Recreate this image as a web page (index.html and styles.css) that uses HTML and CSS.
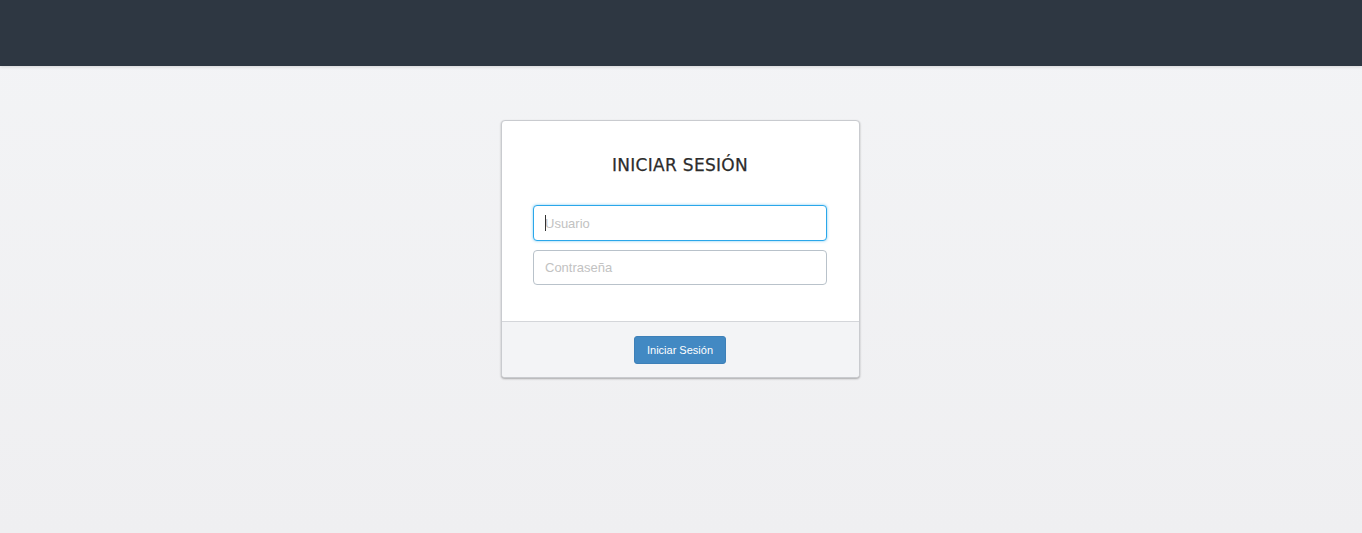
FILE: index.html
```html
<!DOCTYPE html>
<html lang="es">
<head>
<meta charset="utf-8">
<title>Iniciar Sesión</title>
<link rel="stylesheet" href="styles.css">
</head>
<body>
<header class="topbar"></header>
<main class="page">
  <form class="login-card">
    <div class="login-body">
      <h1 class="login-title">INICIAR SESIÓN</h1>
      <div class="field field-focused">
        <input class="input input-focused" type="text" placeholder="Usuario">
        <span class="caret"></span>
      </div>
      <div class="field">
        <input class="input" type="password" placeholder="Contraseña">
      </div>
    </div>
    <div class="login-footer">
      <button class="btn-primary" type="button">Iniciar Sesión</button>
    </div>
  </form>
</main>
</body>
</html>
```
FILE: styles.css
```css
* { box-sizing: border-box; }
html, body { margin: 0; height: 100%; }
body {
  background: linear-gradient(#f3f4f6, #efeff1);
  font-family: "Liberation Sans", Arial, sans-serif;
  color: #333;
}
.topbar {
  height: 66px;
  background: #2e3742;
  box-shadow: 0 1px 3px rgba(0,0,0,0.12);
}
.page {
  display: flex;
  justify-content: center;
  padding-top: 54px;
  padding-right: 1px;
}
.login-card {
  width: 359px;
  background: #fff;
  border: 1px solid #c9cbcf;
  border-radius: 4px;
  box-shadow: 0 1px 2px rgba(0,0,0,0.3);
  overflow: hidden;
}
.login-body {
  padding: 33px 32px 36px 31px;
  display: flex;
  flex-direction: column;
  gap: 9px;
}
.login-title {
  margin: 0 0 21px;
  padding-top: 1px;
  font-family: "DejaVu Sans", Verdana, sans-serif;
  font-size: 17px;
  line-height: 20px;
  font-weight: normal;
  -webkit-text-stroke: 0.25px #2c2c2c;
  text-align: center;
  color: #2c2c2c;
  letter-spacing: 0.3px;
}
.field { position: relative; }
.input {
  display: block;
  width: 100%;
  height: 35px;
  padding: 0 11px;
  border: 1px solid #b9c2ca;
  border-radius: 4px;
  font-family: "Liberation Sans", Arial, sans-serif;
  font-size: 13px;
  color: #333;
  background: #fff;
  outline: none;
}
.input::placeholder { color: #c2c2c2; }
.input-focused {
  height: 36px;
  border-color: #2aa7ea;
  box-shadow: 0 0 3px rgba(42,167,234,0.6);
}
.caret {
  position: absolute;
  left: 12px;
  top: 10px;
  width: 1px;
  height: 16px;
  background: #333;
}
.login-footer {
  border-top: 1px solid #d4d6da;
  background: #f3f4f6;
  padding: 14px 1px 13px 0;
  display: flex;
  justify-content: center;
}
.btn-primary {
  width: 92px;
  height: 28px;
  border: 1px solid #3d80b8;
  border-radius: 3px;
  background: #4289c3;
  color: #fff;
  font-family: "Liberation Sans", Arial, sans-serif;
  font-size: 11px;
  padding: 0;
  cursor: pointer;
}
```
